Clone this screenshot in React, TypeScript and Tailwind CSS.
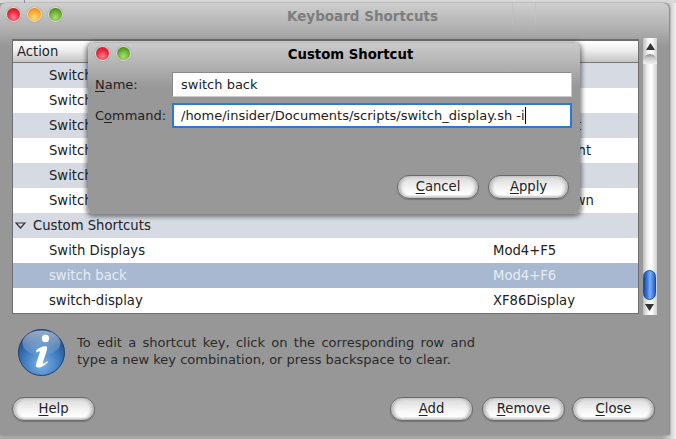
import React from "react";

const rows = [
  ["Switch to Workspace 1", "Ctrl+Alt+1"],
  ["Switch to Workspace 2", "Ctrl+Alt+2"],
  ["Switch to Workspace Left", "Ctrl+Alt+Left"],
  ["Switch to Workspace Right", "Ctrl+Alt+Right"],
  ["Switch to Workspace Up", "Ctrl+Alt+Up"],
  ["Switch to Workspace Down", "Ctrl+Alt+Down"],
];

function Light({ color }: { color: "red" | "orange" | "green" }) {
  const cls =
    color === "red"
      ? "bg-[radial-gradient(circle_at_50%_72%,#ff8090_0%,#f02c3e_50%,#b00c1a_100%)]"
      : color === "orange"
        ? "bg-[radial-gradient(circle_at_50%_72%,#ffdc80_0%,#fbaf30_50%,#d87810_100%)]"
        : "bg-[radial-gradient(circle_at_50%_72%,#acde78_0%,#70b035_50%,#357010_100%)]";
  return <span className={`block w-[15px] h-[15px] rounded-full border border-[#dedede] shadow-[0_0_1px_#666] ${cls}`} />;
}

function Btn({ u, post, className }: { u: string; post: string; className?: string }) {
  return (
    <button className={`w-[83px] h-[24px] rounded-[12px] border border-[#6a6a6a] bg-[linear-gradient(180deg,#d6d6d6_0%,#e8e8e8_30%,#f6f6f6_60%,#ffffff_85%,#c8c8c8_100%)] shadow-[inset_3px_0_3px_#bcbcbc,inset_-3px_0_3px_#bcbcbc,0_1px_1px_#777] text-[13.2px] leading-[20px] text-[#222] ${className ?? ""}`}>
      <u className="underline underline-offset-2">{u}</u>
      {post}
    </button>
  );
}

function InfoIcon() {
  return (
    <svg width="47" height="47" viewBox="0 0 47 47" className="shrink-0">
      <defs>
        <radialGradient id="ib" cx="50%" cy="75%" r="70%">
          <stop offset="0%" stopColor="#7fb2e6" />
          <stop offset="55%" stopColor="#3f7cc0" />
          <stop offset="100%" stopColor="#1d4a86" />
        </radialGradient>
        <linearGradient id="ig" x1="0" y1="0" x2="0" y2="1">
          <stop offset="0%" stopColor="#ffffff" stopOpacity="0.55" />
          <stop offset="100%" stopColor="#ffffff" stopOpacity="0.05" />
        </linearGradient>
      </defs>
      <circle cx="23.5" cy="23.5" r="23" fill="url(#ib)" stroke="#1f3f6e" strokeWidth="1" />
      <ellipse cx="23.5" cy="14" rx="19" ry="12.5" fill="url(#ig)" />
      <circle cx="27.5" cy="9.5" r="3.7" fill="#fff" />
      <path d="M18 21.5 C21 18.5 26 16.5 28.5 17.5 C29.8 18.2 29 20.5 28.4 22.5 L25 33 C24.6 34.5 25 35 26 34.5 C27 34 28.3 33 29.3 32 L30 33 C27.5 36 23 38.8 19.8 38.6 C17.6 38.4 17.6 36.6 18.2 34.6 L21.6 24 C22 22.6 21.6 22 20.6 22.4 C20 22.7 19.3 23.1 18.6 23.6 Z" fill="#fff" />
    </svg>
  );
}

function ScrollBar() {
  return (
    <div className="relative ml-[4px] w-[14px] h-[277px] -mt-[1px] flex flex-col items-center bg-[linear-gradient(90deg,#bdbdbd_0%,#f4f4f4_35%,#ffffff_60%,#d0d0d0_100%)]">
      <svg width="9" height="7" viewBox="0 0 9 7" className="mt-[5px]">
        <path d="M4.5 0 L9 7 L0 7 Z" fill="#333" />
      </svg>
      <div className="mt-[4px] w-[14px] h-[10px] rounded-t-[7px] bg-[linear-gradient(180deg,#8f8f8f_0%,#c8c8c8_40%,#f2f2f2_100%)]" />
      <div className="absolute left-0 top-[232px] w-[13px] h-[30px] rounded-[7px] border border-[#1b4fa0] bg-[linear-gradient(90deg,#1a4aa8_0%,#3c7ae0_30%,#7fb0f4_55%,#2560c8_100%)]" />
      <svg width="9" height="7" viewBox="0 0 9 7" className="absolute left-[2px] top-[266px]">
        <path d="M0 0 L9 0 L4.5 7 Z" fill="#333" />
      </svg>
    </div>
  );
}

function Row({ name, keys, kind }: { name: string; keys?: string; kind: "odd" | "even" | "sel" }) {
  const bg = kind === "odd" ? "bg-[#d5dae3] text-[#222]" : kind === "even" ? "bg-white text-[#222]" : "bg-[#a9b8d1] text-[#e6ecf4]";
  return (
    <div className={`flex items-center h-[25px] ${bg}`}>
      <span className="pl-[36px] w-[480px] whitespace-nowrap">{name}</span>
      <span className="whitespace-nowrap">{keys}</span>
    </div>
  );
}

export default function App() {
  return (
    <div className="relative w-[676px] h-[439px] overflow-hidden bg-[linear-gradient(90deg,#a8a8a8_0%,#a8a8a8_98%,#f0f0f0_100%)] text-[13.2px] [font-family:'DejaVu_Sans',sans-serif]">
      <div className="h-[3px] bg-[#d8d8d8]" />
      <span className="absolute left-[24px] top-0 w-px h-[6px] bg-[#8a90a0]" />
      <div className="w-[669px] h-[432px] rounded-t-[6px] bg-[#979797] bg-[linear-gradient(180deg,#cecece_0%,#b0b0b0_6%,#979797_10%,#979797_100%)] flex flex-col shadow-[1px_0_2px_#777] relative">
        {/* title bar */}
        <div className="relative h-[36px] flex items-start pt-[4px] pl-[6px] gap-[6px]">
          <Light color="red" />
          <Light color="orange" />
          <Light color="green" />
          <span className="absolute left-0 right-0 top-[3px] pl-[56px] text-center font-bold text-[#7d7d7d] text-[13.5px]">
            Keyboard Shortcuts
          </span>
          <span className="absolute left-[512px] top-0 w-[24px] h-[22px] border-x border-[#c2c2c2] opacity-60" />
        </div>

        {/* table + scrollbar */}
        <div className="flex pl-[12px]">
          <div className="w-[627px] h-[275px] border border-[#6e6e6e] border-t-2 bg-white overflow-hidden">
            <div className="h-[22px] pl-[4px] flex items-center border-b border-[#777] bg-[linear-gradient(180deg,#ffffff_0%,#f0f0f0_40%,#c4c4c4_100%)] text-[#222]">
              Action
            </div>
            {rows.map((r, i) => (
              <Row key={r[0]} name={r[0]} keys={r[1]} kind={i % 2 === 0 ? "odd" : "even"} />
            ))}
            <div className="flex items-center h-[25px] bg-[#d5dae3] text-[#222] pl-[2px]">
              <svg width="11" height="7" viewBox="0 0 11 7" className="mr-[7px]">
                <path d="M1 1 L10 1 L5.5 6 Z" fill="none" stroke="#333" strokeWidth="1.2" />
              </svg>
              Custom Shortcuts
            </div>
            <Row name="Swith Displays" keys="Mod4+F5" kind="even" />
            <Row name="switch back" keys="Mod4+F6" kind="sel" />
            <Row name="switch-display" keys="XF86Display" kind="even" />
          </div>
          <ScrollBar />
        </div>

        {/* info */}
        <div className="flex items-center -mt-[2px] pt-[16px] pl-[18px] gap-[12px]">
          <InfoIcon />
          <div className="w-[398px] leading-[17px] text-[#2a2a2a] text-[13px] pb-[3px]">
            <div className="[text-align:justify] [text-align-last:justify]">To edit a shortcut key, click on the corresponding row and</div>
            <div className="whitespace-nowrap">type a new key combination, or press backspace to clear.</div>
          </div>
        </div>

        {/* buttons */}
        <div className="flex items-center mt-[21px] pl-[12px] pr-[13px]">
          <Btn u="H" post="elp" />
          <div className="flex-1" />
          <Btn u="A" post="dd" className="mr-[9px]" />
          <Btn u="R" post="emove" className="mr-[7px]" />
          <Btn u="C" post="lose" className="mr-[1px]" />
        </div>
      </div>

      {/* Custom Shortcut dialog */}
      <div className="absolute left-[88px] top-[43px] w-[492px] h-[171px] rounded-[6px] bg-[linear-gradient(180deg,#cacaca_0%,#b4b4b4_12%,#989898_26%,#989898_100%)] shadow-[0_1px_4px_2px_rgba(40,40,40,0.55)] flex flex-col text-[13px]">
        <div className="relative h-[29px] flex items-start pt-[3px] pl-[7px] gap-[6px]">
          <Light color="red" />
          <Light color="green" />
          <span className="absolute left-0 right-0 top-[2px] pl-[33px] text-center font-bold text-black text-[13.25px]">Custom Shortcut</span>
        </div>
        <div className="grid grid-cols-[77px_400px] gap-y-[6px] pl-[7px] items-center text-[#222]">
          <label>
            <u className="underline underline-offset-2">N</u>ame:
          </label>
          <div className="h-[25px] border border-[#8a8a8a] border-r-[#c8c8c8] border-b-[#c8c8c8] bg-white pl-[8px] leading-[23px]">switch back</div>
          <label>
            C<u className="underline underline-offset-2">o</u>mmand:
          </label>
          <div className="h-[25px] border-2 border-[#2a78d8] bg-white pl-[7px] whitespace-nowrap flex items-center">
            /home/insider/Documents/scripts/switch_display.sh -i
            <span className="inline-block w-px h-[17px] bg-black" />
          </div>
        </div>
        <div className="flex justify-end mt-[47px] pr-[11px]">
          <Btn u="C" post="ancel" className="mr-[9px] !w-[82px]" />
          <Btn u="A" post="pply" className="!w-[81px]" />
        </div>
      </div>
    </div>
  );
}
